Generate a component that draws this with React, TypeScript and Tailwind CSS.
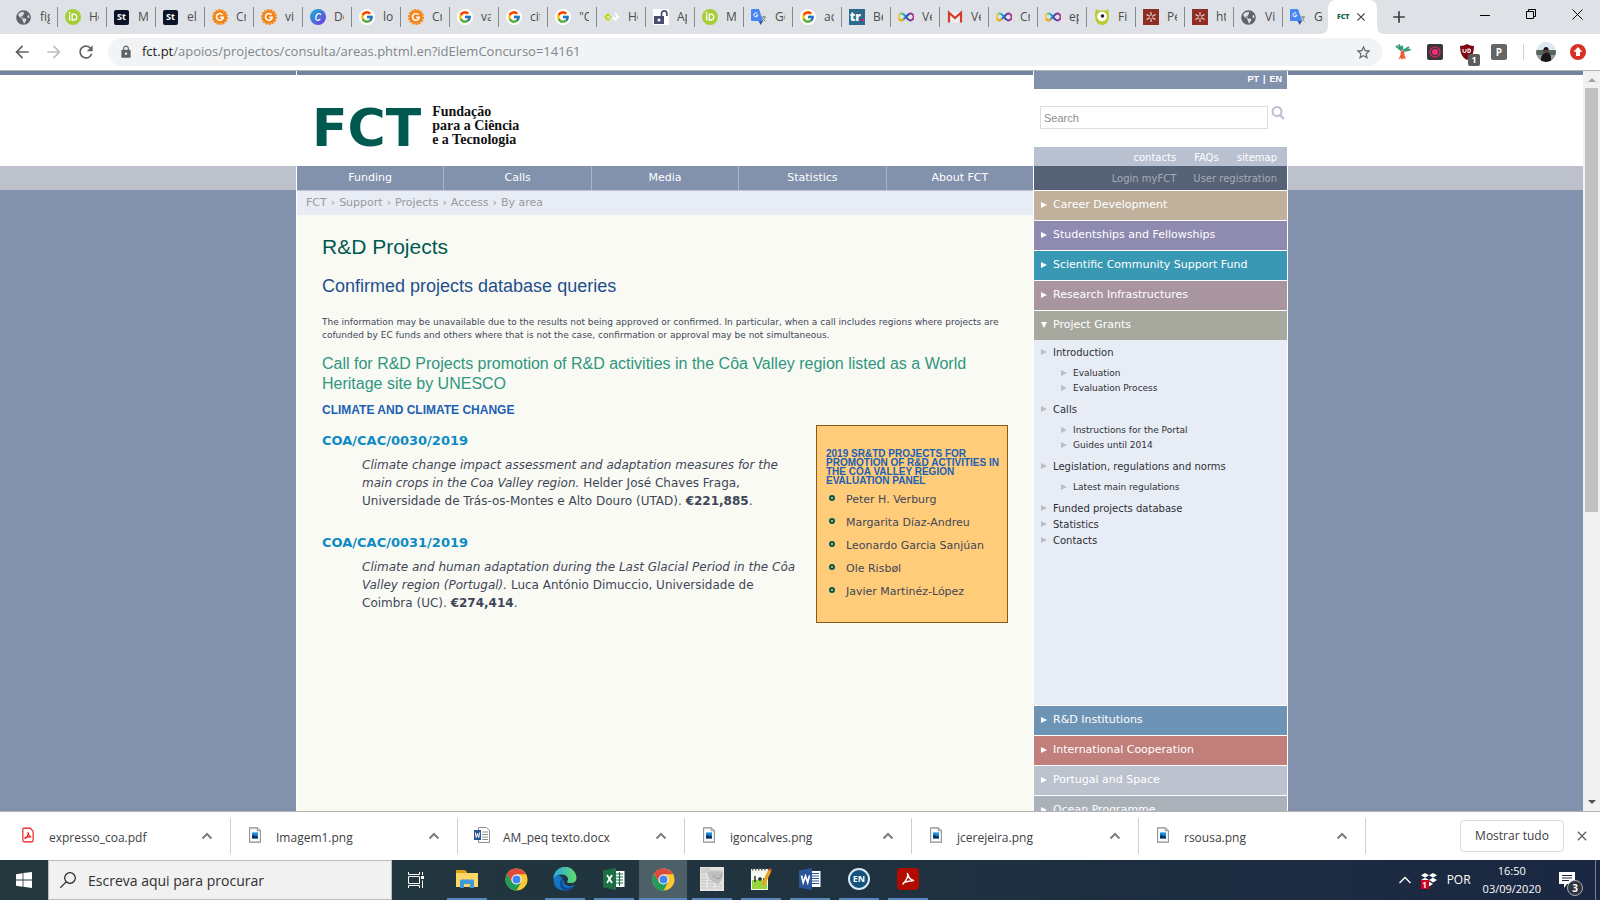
import type { ReactNode } from 'react';
import { FaGlobeAmericas } from 'react-icons/fa';
import { FcGoogle } from 'react-icons/fc';
import { MdArrowBack, MdArrowForward, MdRefresh, MdLock, MdStarBorder, MdClose, MdAdd } from 'react-icons/md';

const Globe = () => <FaGlobeAmericas className="size-[15px] text-[#5f6368]" />;

const Orcid = () => (
  <svg viewBox="0 0 16 16" className="size-4">
    <circle cx="8" cy="8" r="8" fill="#a6ce39" />
    <path d="M4.6 5.6v6M7.2 5.2v5.8h1.6c4 0 4-5.8 0-5.8z" fill="none" stroke="#fff" strokeWidth="1.3" />
    <circle cx="4.6" cy="3.8" r=".9" fill="#fff" />
  </svg>
);

const Statista = () => (
  <span className="flex size-[15px] items-center justify-center rounded-[2px] bg-[#0b1426] text-[9px] font-bold text-white">St</span>
);

const OrangeG = () => (
  <svg viewBox="0 0 16 16" className="size-4">
    <circle cx="8" cy="8" r="6.8" fill="#f68212" />
    <circle cx="8" cy="8" r="7.2" fill="none" stroke="#f68212" strokeWidth="1.6" strokeDasharray="2 1.2" />
    <path d="M10.6 5.8A3.4 3.4 0 1 0 11.3 8.4H8.2" fill="none" stroke="#fff" strokeWidth="1.6" />
  </svg>
);

const Canva = () => (
  <svg viewBox="0 0 16 16" className="size-4">
    <defs>
      <linearGradient id="canva" x1="0" y1="0" x2="1" y2="1">
        <stop offset="0" stopColor="#12b6cf" />
        <stop offset="1" stopColor="#7a30e6" />
      </linearGradient>
    </defs>
    <circle cx="8" cy="8" r="8" fill="url(#canva)" />
    <path d="M10.6 6c.2-2.6-4.6-1.800-4.800 2.600C5.700 12.200 9 12 10.300 9.900" fill="none" stroke="#fff" strokeWidth="1.2" />
  </svg>
);

const Google = () => (
  <span className="flex size-4 items-center justify-center rounded-full bg-white">
    <FcGoogle className="size-[14px]" />
  </span>
);

const Diamonds = () => (
  <svg viewBox="0 0 16 16" className="size-4">
    <path d="M4 5 1.300 8 4 11M4 5l1.500 1.500M4 11l1.500-1.500" fill="none" stroke="#c8d400" strokeWidth="1.800" />
    <path d="M12 5.500 14 8l-2.500 2.500L9 8" fill="none" stroke="#fff" strokeWidth="2" />
    <path d="M6.500 6.800 7.800 8 6.500 9.200 5.300 8z" fill="#c8d400" />
    <path d="m11.500 3 1.200 1.200-1.200 1.200-1.200-1.200z" fill="#fff" />
  </svg>
);

const OpenLock = () => (
  <svg viewBox="0 0 16 16" className="size-4">
    <path fill="#fff" d="M0 0h16v16H0z" />
    <path fill="#4a4e6e" d="M1 7h10v8H1z" />
    <path d="M8.500 7V4.500a2.700 2.700 0 0 1 5.400 0V7" fill="none" stroke="#4a4e6e" strokeWidth="1.700" />
    <circle cx="6" cy="11" r="1.500" fill="#fff" />
  </svg>
);

const Translate = () => (
  <svg viewBox="0 0 16 16" className="size-4">
    <path fill="#dfe0e2" d="M6 4h9q1 0 1 1v10q0 1-1 1H9z" />
    <path fill="#4687f4" d="M1 0h7l4 12H1q-1 0-1-1V1q0-1 1-1z" />
    <path fill="#3155b5" d="m7.500 12 2.200 4 2.300-4z" />
    <path d="M6.300 4.300a2 2 0 1 0 .6 1.900H4.900" fill="none" stroke="#fff" strokeWidth="1" />
    <path d="M10.500 8h4.500M12.700 7v1M14 8q-.5 2.500-3 4M11.500 9.500l3 3" fill="none" stroke="#6d7a86" strokeWidth=".9" />
  </svg>
);

const Tr = () => (
  <span className="flex size-4 items-center justify-center bg-[#2c6a8c] text-[12px] font-extrabold text-white">
    tr<span className="text-[#e6127d]">.</span>
  </span>
);

const Infinity8 = () => (
  <svg viewBox="0 0 16 16" className="size-4">
    <defs>
      <linearGradient id="loop">
        <stop offset="0" stopColor="#f2dc12" />
        <stop offset=".35" stopColor="#12a6df" />
        <stop offset=".6" stopColor="#3b3fa0" />
        <stop offset="1" stopColor="#c2308c" />
      </linearGradient>
    </defs>
    <path d="M8 8C6 5.300 4.800 4.600 3.700 4.600a3.200 3.200 0 0 0 0 6.800C5.500 11.400 10 4.600 12.300 4.600a3.200 3.200 0 0 1 0 6.800C11 11.400 10 10.700 8 8z" fill="none" stroke="url(#loop)" strokeWidth="2" />
    <path d="M1 9.500q2 3.500 5 .8" fill="none" stroke="#f7a81b" strokeWidth="1.900" />
  </svg>
);

const Gmail = () => (
  <svg viewBox="0 0 16 16" className="size-4">
    <path fill="#efefef" d="M1 3h14v10.500H1z" />
    <path d="M2 13.500V3.700L8 9l6-5.300v9.800" fill="none" stroke="#d5392c" strokeWidth="2.200" />
  </svg>
);

const Owl = () => (
  <svg viewBox="0 0 16 16" className="size-4">
    <path d="M2 0q1 1.500 3 1.500h6Q13 1.500 14 0q1.500 4 .9 8.500Q14 16 8 16T1.100 8.500Q.5 4 2 0z" fill="#bccb35" />
    <circle cx="8" cy="7.500" r="4.800" fill="#fff" />
    <circle cx="8.500" cy="7" r="1.800" fill="#222" />
  </svg>
);

const Star6 = () => (
  <svg viewBox="0 0 16 16" className="size-4">
    <path fill="#8e2e24" d="M0 0h16v16H0z" />
    <path d="M8 3v10M3.500 5.500l9 5M12.500 5.500l-9 5" stroke="#f3dcd6" strokeWidth="1.100" />
    <circle cx="8" cy="8" r="1.500" fill="#8e2e24" />
  </svg>
);

const tabs: { icon: () => ReactNode; text: string }[] = [
  { icon: Globe, text: 'fig' },
  { icon: Orcid, text: 'Ho' },
  { icon: Statista, text: 'M' },
  { icon: Statista, text: 'el' },
  { icon: OrangeG, text: 'Cr' },
  { icon: OrangeG, text: 'vi' },
  { icon: Canva, text: 'Do' },
  { icon: Google, text: 'lo' },
  { icon: OrangeG, text: 'Cr' },
  { icon: Google, text: 'va' },
  { icon: Google, text: 'cit' },
  { icon: Google, text: '"C' },
  { icon: Diamonds, text: 'Ho' },
  { icon: OpenLock, text: 'Ap' },
  { icon: Orcid, text: 'M' },
  { icon: Translate, text: 'Go' },
  { icon: Google, text: 'ac' },
  { icon: Tr, text: 'Be' },
  { icon: Infinity8, text: 'Ve' },
  { icon: Gmail, text: 'Ve' },
  { icon: Infinity8, text: 'Cr' },
  { icon: Infinity8, text: 'ep' },
  { icon: Owl, text: 'Fi' },
  { icon: Star6, text: 'Pe' },
  { icon: Star6, text: 'ht' },
  { icon: Globe, text: 'Vi' },
  { icon: Translate, text: 'G' },
];

function TabStrip() {
  return (
    <div className="flex h-[34px] shrink-0 bg-[#dee1e6]">
      <div className="flex pl-[9px]">
        {tabs.map(({ icon: Icon, text }, i) => (
          <button key={i} type="button" className="flex w-[49px] items-center text-[12px] text-[#4a4d51]">
            <span className="flex w-[31px] shrink-0 items-center pl-[7px]">
              <Icon />
            </span>
            <span className="w-[10px] overflow-hidden text-left whitespace-nowrap">{text}</span>
            <span className={i === tabs.length - 1 ? 'hidden' : 'ml-auto h-5 w-px bg-[#85888c]'} />
          </button>
        ))}
      </div>
      <div className="relative -ml-1 flex w-[49px] items-center rounded-t-lg bg-white pl-[9px]">
        <svg viewBox="0 0 8 8" className="absolute bottom-0 -left-2 size-2"><path fill="#fff" d="M0 8q8 0 8-8v8z" /></svg>
        <svg viewBox="0 0 8 8" className="absolute -right-2 bottom-0 size-2"><path fill="#fff" d="M8 8Q0 8 0 0v8z" /></svg>
        <span className="text-[7px] font-extrabold text-[#0f5c50]">FCT</span>
        <button type="button" aria-label="Close tab" className="ml-auto pr-[9px] text-[#3c4043]"><MdClose className="size-[14px]" /></button>
      </div>
      <button type="button" aria-label="New tab" className="ml-3 text-[#3c4043]"><MdAdd className="size-5" /></button>
      <div className="ml-auto flex items-start gap-[30px] pt-[6px] pr-[15px]">
        <svg viewBox="0 0 16 16" className="size-4"><path d="M3 9.500h10" stroke="#000" /></svg>
        <svg viewBox="0 0 16 16" className="size-4"><path d="M3.500 5.500h7v7h-7zM5.500 5.500v-2h7v7h-2" fill="none" stroke="#000" /></svg>
        <svg viewBox="0 0 16 16" className="size-4"><path d="m3.500 3.500 10 10m0-10-10 10" stroke="#000" /></svg>
      </div>
    </div>
  );
}

function Toolbar() {
  return (
    <div className="flex h-9 shrink-0 items-center bg-white pl-3">
      <button type="button" aria-label="Back" className="text-[#5f6368]"><MdArrowBack className="size-5" /></button>
      <button type="button" aria-label="Forward" className="ml-3 text-[#bdbfc2]"><MdArrowForward className="size-5" /></button>
      <button type="button" aria-label="Reload" className="ml-3 text-[#5f6368]"><MdRefresh className="size-5" /></button>
      <div className="ml-3 flex h-7 flex-1 items-center rounded-full bg-[#f1f3f4] pr-[10px] pl-[11px]">
        <MdLock className="size-[14px] text-[#5f6368]" />
        <p className="ml-[9px] flex-1 text-[13px] text-[#80868b]"><span className="text-[#202124]">fct.pt</span>/apoios/projectos/consulta/areas.phtml.en?idElemConcurso=14161</p>
        <button type="button" aria-label="Bookmark" className="text-[#5f6368]"><MdStarBorder className="size-[17px]" /></button>
      </div>
      <div className="flex items-center gap-4 pr-[14px] pl-[13px]">
        <svg viewBox="0 0 16 16" className="size-4">
          <path d="M1 2 6.500 6.500M3.500.5 7 6M7 1.500 7.500 6M15.500 5.500 8.500 7M14 3 8.500 6.500" fill="none" stroke="#2ea075" strokeWidth="1.900" />
          <path d="M6 6.500h3l.5 4.500 1.500 4.500-2.500-1.500-1.500 2-1-2-2.500 1.500L5.500 11z" fill="#ee5d3b" />
        </svg>
        <svg viewBox="0 0 16 16" className="size-4">
          <rect width="16" height="16" rx="2" fill="#38383a" />
          <circle cx="8" cy="8" r="5" fill="none" stroke="#e5266b" strokeWidth="1.200" />
          <circle cx="8" cy="8" r="3" fill="#f22f78" />
        </svg>
        <span className="relative">
          <svg viewBox="0 0 16 16" className="size-4">
            <path d="M8 0q3 2 7 2 0 11-7 14Q1 13 1 2q4 0 7-2z" fill="#800610" />
            <path d="M4 5v2.500q1.500 2 3 0V5M9 5v3.500h1.500q2-1.700 0-3.500z" fill="none" stroke="#fff" strokeWidth="1.100" />
          </svg>
          <span className="absolute top-[10px] left-[9px] flex h-3 w-3 items-center justify-center rounded-[2px] bg-[#5c5c5c] text-[9px] font-bold text-white">1</span>
        </span>
        <span className="flex size-4 items-center justify-center rounded-[2px] bg-[#656565] text-[10px] font-bold text-white">P</span>
        <span className="-mr-1 h-4 w-px bg-[#cfd1d4]" />
        <svg viewBox="0 0 20 20" className="size-5">
          <defs><clipPath id="face"><circle cx="10" cy="10" r="10" /></clipPath></defs>
          <g clipPath="url(#face)">
            <path fill="#dbe8f4" d="M0 0h20v20H0z" />
            <path fill="#586459" d="M0 8h20v5H0z" />
            <path fill="#9b9c98" d="M0 13h20v7H0z" />
            <path fill="#16181c" d="M5 20q-1-7 4-9l3-1q4 3 3 10z" />
            <circle cx="10" cy="8.500" r="2.600" fill="#5d4237" />
            <path fill="#17120f" d="M7.400 8.500q0-3.500 2.600-3.500t2.600 3l-2.600-.6z" />
          </g>
        </svg>
        <svg viewBox="0 0 16 16" className="-ml-[2px] size-4">
          <circle cx="8" cy="8" r="8" fill="#d93025" />
          <path d="m8 3 4.500 4.800H10V12H6V7.800H3.500z" fill="#fff" />
        </svg>
      </div>
    </div>
  );
}

function Gutter({ side }: { side: 'left' | 'right' }) {
  return (
    <div className={side === 'left' ? 'flex grow basis-px flex-col' : 'flex grow basis-0 flex-col'}>
      <div className="h-1 bg-[#7382a0]" />
      <div className="h-[91px] bg-white" />
      <div className="h-6 bg-[#bcc1cb]" />
      <div className="flex-1 bg-[#8291ac]" />
    </div>
  );
}

const projects = [
  {
    id: 'COA/CAC/0030/2019',
    title: 'Climate change impact assessment and adaptation measures for the main crops in the Coa Valley region.',
    who: 'Helder José Chaves Fraga, Universidade de Trás-os-Montes e Alto Douro (UTAD).',
    sum: '€221,885',
  },
  {
    id: 'COA/CAC/0031/2019',
    title: 'Climate and human adaptation during the Last Glacial Period in the Côa Valley region (Portugal).',
    who: 'Luca António Dimuccio, Universidade de Coimbra (UC).',
    sum: '€274,414',
  },
];

const panel = ['Peter H. Verburg', 'Margarita Díaz-Andreu', 'Leonardo Garcia Sanjúan', 'Ole Risbøl', 'Javier Martinéz-López'];

function MainColumn() {
  return (
    <div className="flex min-w-0 flex-1 flex-col bg-[#f9faf4]">
      <div className="h-1 bg-[#7382a0]" />
      <header className="flex h-[91px] bg-white pt-[28px] pl-[15px]">
        <a href="#home" className="flex">
          <span className="text-[52px] leading-[50px] font-bold text-[#00594f]">FCT</span>
          <span className="mt-[2px] ml-[11px] font-['Liberation_Serif',serif] text-[14px] leading-[14px] font-bold text-[#111]">
            Fundação<br />para a Ciência<br />e a Tecnologia
          </span>
        </a>
      </header>
      <nav className="flex h-[25px] border-b border-[#bcc4d2] bg-[#8291ac] text-[11px] text-white">
        {['Funding', 'Calls', 'Media', 'Statistics', 'About FCT'].map((t) => (
          <a key={t} href="#nav" className="flex flex-1 items-center justify-center border-r border-[#a9b4c7] pt-px last:border-r-0">{t}</a>
        ))}
      </nav>
      <div className="flex h-6 items-center gap-1 bg-[#e8edf5] pl-[9px] text-[11px] text-[#999]">
        <a href="#fct">FCT</a>›<a href="#support">Support</a>›<a href="#projects">Projects</a>›<a href="#access">Access</a>›<span>By area</span>
      </div>
      <main className="px-[25px] text-[#3f4757]">
        <h1 className="mt-5 font-['Liberation_Sans',Arial,sans-serif] text-[21px] leading-6 text-[#00594f]">R&amp;D Projects</h1>
        <h2 className="mt-[15px] font-['Liberation_Sans',Arial,sans-serif] text-[18px] leading-6 text-[#1f4f8c]">Confirmed projects database queries</h2>
        <p className="mt-[18px] text-[9px] leading-[13px]">
          The information may be unavailable due to the results not being approved or confirmed. In particular, when a call includes regions where projects are cofunded by EC funds and others where that is not the case, confirmation or approval may be not simultaneous.
        </p>
        <h3 className="mt-3 font-['Liberation_Sans',Arial,sans-serif] text-[16px] leading-5 text-[#2f9680]">
          Call for R&amp;D Projects promotion of R&amp;D activities in the Côa Valley region listed as a World Heritage site by UNESCO
        </h3>
        <h4 className="mt-2 font-['Liberation_Sans',Arial,sans-serif] text-[12px] leading-4 font-bold text-[#1d5fb4]">CLIMATE AND CLIMATE CHANGE</h4>
        <div className="mt-[7px] flex">
          <div className="flex-1 pt-2">
            {projects.map((p) => (
              <article key={p.id} className="mb-[25px]">
                <h5 className="text-[13px] leading-4 font-bold text-[#0d8bc4]">{p.id}</h5>
                <p className="mt-[7px] pr-3 pl-10 text-[12px] leading-[18px]">
                  <i>{p.title}</i> {p.who} <b>{p.sum}</b>.
                </p>
              </article>
            ))}
          </div>
          <aside className="w-[192px] self-start border border-[#8b5a14] bg-[#ffcc7a] px-[9px] pt-[23px] pb-[18px]">
            <h5 className="font-['Liberation_Sans',Arial,sans-serif] text-[10px] leading-[9px] font-bold whitespace-nowrap text-[#1d5fb4]">
              2019 SR&amp;TD PROJECTS FOR<br />PROMOTION OF R&amp;D ACTIVITIES IN<br />THE CÔA VALLEY REGION<br />EVALUATION PANEL
            </h5>
            <ul className="mt-1">
              {panel.map((n) => (
                <li key={n} className="flex h-[23px] items-center text-[11px]">
                  <svg viewBox="0 0 6 6" className="mr-[11px] mb-[5px] ml-[3px] size-[6px]"><circle cx="3" cy="3" r="2" fill="none" stroke="#00594f" strokeWidth="2" /></svg>
                  {n}
                </li>
              ))}
            </ul>
          </aside>
        </div>
      </main>
    </div>
  );
}

const Arrow = ({ down = false }: { down?: boolean }) => (
  <svg viewBox="0 0 6 8" className="h-2 w-[6px] shrink-0 fill-current"><path d={down ? 'M0 0h6L3 6z' : 'M0 0v6l6-3z'} /></svg>
);

const MenuLink = ({ tone, down, children }: { tone: string; down?: boolean; children: string }) => (
  <a href="#menu" className={`mt-px flex h-[29px] shrink-0 items-center gap-[6px] pl-[7px] text-[11px] text-white ${tone}`}>
    <Arrow down={down} />
    {children}
  </a>
);

const grants: { text: string; sub?: string[] }[] = [
  { text: 'Introduction', sub: ['Evaluation', 'Evaluation Process'] },
  { text: 'Calls', sub: ['Instructions for the Portal', 'Guides until 2014'] },
  { text: 'Legislation, regulations and norms', sub: ['Latest main regulations'] },
  { text: 'Funded projects database' },
  { text: 'Statistics' },
  { text: 'Contacts' },
];

function SideColumn() {
  return (
    <div className="flex w-[253px] flex-col bg-white">
      <div className="flex h-[18px] shrink-0 items-center justify-end gap-1 bg-[#8291ac] pr-[5px] font-['Liberation_Sans',Arial,sans-serif] text-[9px] font-bold text-white">
        <a href="#pt">PT</a>|<a href="#en">EN</a>
      </div>
      <form className="flex h-[58px] shrink-0 pt-[17px] pl-[6px]">
        <input aria-label="Search" placeholder="Search" className="h-[23px] w-[228px] border border-[#ddd] px-[3px] font-['Liberation_Sans',Arial,sans-serif] text-[11px] placeholder:text-[#8c8c8c]" />
        <button type="button" aria-label="Go" className="ml-[3px] self-start">
          <svg viewBox="0 0 14 14" className="size-[14px]"><circle cx="6" cy="5.500" r="4.500" fill="none" stroke="#b9c0d0" strokeWidth="2" /><path d="m9 9 4 4" stroke="#b9c0d0" strokeWidth="2.400" /></svg>
        </button>
      </form>
      <div className="flex h-[19px] shrink-0 items-center justify-end gap-[18px] bg-[#b9c0d0] pt-[2px] pr-[10px] text-[10px] text-white">
        <a href="#contacts">contacts</a><a href="#faqs">FAQs</a><a href="#sitemap">sitemap</a>
      </div>
      <div className="flex h-6 shrink-0 items-center justify-end gap-[17px] bg-[#566275] pt-px pr-[10px] text-[10px] text-[#a6abb5]">
        <a href="#login">Login myFCT</a><a href="#register">User registration</a>
      </div>
      <MenuLink tone="bg-[#c0b09c]">Career Development</MenuLink>
      <MenuLink tone="bg-[#8e8ab0]">Studentships and Fellowships</MenuLink>
      <MenuLink tone="bg-[#3998b3]">Scientific Community Support Fund</MenuLink>
      <MenuLink tone="bg-[#a995a0]">Research Infrastructures</MenuLink>
      <MenuLink tone="bg-[#a7a99f]" down>Project Grants</MenuLink>
      <ul className="min-h-[365px] shrink-0 bg-[#e8edf5] pt-[5px] pl-[7px] text-[10px] leading-4 text-[#2c2f36]">
        {grants.map((g) => (
          <li key={g.text}>
            <a href="#grants" className="flex items-center gap-[6px]"><span className="text-[#b9becb]"><Arrow /></span>{g.text}</a>
            {g.sub && (
              <ul className="mt-[5px] mb-[6px] pl-5 text-[9px] leading-[15px]">
                {g.sub.map((s) => (
                  <li key={s}><a href="#grants" className="flex items-center gap-[6px]"><span className="text-[#b9becb]"><Arrow /></span>{s}</a></li>
                ))}
              </ul>
            )}
          </li>
        ))}
      </ul>
      <MenuLink tone="bg-[#6e94b5]">R&amp;D Institutions</MenuLink>
      <MenuLink tone="bg-[#c07f7b]">International Cooperation</MenuLink>
      <MenuLink tone="bg-[#bcc3cf]">Portugal and Space</MenuLink>
      <MenuLink tone="bg-[#aab1b9]">Ocean Programme</MenuLink>
    </div>
  );
}

const ImageFile = () => (
  <svg viewBox="0 0 14 18" className="h-4 w-3">
    <path d="M.7.700h9L13.300 4v13.300H.7z" fill="#fbfbfb" stroke="#8d8d8d" strokeWidth="1.200" />
    <path d="M9.500.700V4h3.800" fill="#ddd" stroke="#8d8d8d" />
    <path fill="#1b8be0" d="M3.500 6h7v7h-7z" /><path fill="#0b2f60" d="m3.500 13v-3l2-1.500 2 2 1-1 2 1.500v2z" />
  </svg>
);
const PdfFile = () => (
  <svg viewBox="0 0 14 18" className="h-4 w-3">
    <path d="M2 1h7.500L13 4.500V15q0 2-2 2H3q-2 0-2-2V3q0-2 1-2z" fill="#fff" stroke="#ef1010" strokeWidth="1.300" />
    <path d="M7 5.500q1 5-3.500 7.500-1-2 7-1.800Q7.500 10 7 5.500z" fill="none" stroke="#ef1010" strokeWidth="1.200" />
  </svg>
);
const WordFile = () => (
  <svg viewBox="0 0 16 16" className="size-4">
    <path d="M4.500.500h8l3 3v12h-11z" fill="#fff" stroke="#8d8d8d" />
    <path d="M8 5h6M8 7.500h6M8 10h6M8 12.500h6" stroke="#8f8f8f" />
    <path fill="#2a5699" d="M0 3h7v10H0z" /><path d="m1.300 5.500 1 5 1.200-4 1.200 4 1-5" fill="none" stroke="#fff" />
  </svg>
);

const downloads: { name: string; icon: () => ReactNode }[] = [
  { name: 'expresso_coa.pdf', icon: PdfFile },
  { name: 'Imagem1.png', icon: ImageFile },
  { name: 'AM_peq texto.docx', icon: WordFile },
  { name: 'igoncalves.png', icon: ImageFile },
  { name: 'jcerejeira.png', icon: ImageFile },
  { name: 'rsousa.png', icon: ImageFile },
];

function Downloads() {
  return (
    <div className="flex h-[49px] shrink-0 items-center border-t border-[#b3b3b3] bg-white pl-1">
      {downloads.map(({ name, icon: Icon }) => (
        <div key={name} className="flex h-9 w-[227px] items-center border-r border-[#cfcfcf] text-[12px] text-[#3c4043]">
          <span className="flex w-[45px] items-center justify-center pl-[3px] pb-[2px]"><Icon /></span>
          <span className="flex-1 pt-[4px]">{name}</span>
          <button type="button" aria-label="Options" className="mr-[17px]">
            <svg viewBox="0 0 12 8" className="h-2 w-3"><path d="m1.500 6.500 4.500-4.500 4.500 4.500" fill="none" stroke="#7d7d7d" strokeWidth="2" /></svg>
          </button>
        </div>
      ))}
      <button type="button" className="ml-auto h-8 w-[104px] rounded-[4px] border border-[#dadce0] text-[12px] text-[#3c4043]">Mostrar tudo</button>
      <button type="button" aria-label="Close" className="mr-[10px] ml-[10px] text-[#5f6368]"><MdClose className="size-4" /></button>
    </div>
  );
}

const Chrome = () => (
  <svg viewBox="0 0 24 24" className="size-[23px]">
    <circle cx="12" cy="12" r="11.500" fill="#fcc934" />
    <path d="M2.040 6.250 7.200 15 12 12V6.500h9.960A11.500 11.500 0 0 0 2.040 6.250z" fill="#dd4b3e" />
    <path d="M2.040 6.250 7.300 15 12 17l4.700-2L12 23.500A11.500 11.500 0 0 1 2.040 6.250z" fill="#1e9e58" />
    <circle cx="12" cy="12" r="5.300" fill="#fff" />
    <circle cx="12" cy="12" r="4.200" fill="#4285f4" />
  </svg>
);
const Explorer = () => (
  <svg viewBox="0 0 22 20" className="h-5 w-[22px]">
    <path fill="#e0a015" d="M0 1h9l2 2v3H0z" /><path fill="#ffd769" d="M0 4h22v14H0z" />
    <path fill="#3f97dc" d="M4 12q0-1.500 1.500-1.500h11q1.500 0 1.500 1.500v7h-4v-4H8v4H4z" />
  </svg>
);
const Edge = () => (
  <svg viewBox="0 0 24 24" className="size-6">
    <defs>
      <linearGradient id="edgeTop"><stop offset="0" stopColor="#2aa7e0" /><stop offset="1" stopColor="#5fdc6a" /></linearGradient>
    </defs>
    <path d="M.7 10Q-.5 23 12 23.500q6 0 9.500-5.500-3 1.500-6 1-5-1-5-5.500Q9 9 5 8.500 2 8.500.7 10z" fill="#1376c9" />
    <path d="M.5 11.500A11.500 11.500 0 0 1 23.500 11q0 5-6 5-3.500 0-3.500-1.500 1.500-1 .8-3.500Q13 7 8 7.500 3 8 .5 11.500z" fill="url(#edgeTop)" />
    <path d="M10.500 11q-3.500 6 2 9.500 4 1.500 9-2-3.500 5-9 5Q6 22 7 15q.5-3 3.500-4z" fill="#0e4c98" />
  </svg>
);
const Office = ({ color, kind }: { color: string; kind: 'x' | 'w' }) => (
  <svg viewBox="0 0 22 22" className="size-[22px]">
    <path d="M11 3h10.500v16H11z" fill="#fff" />
    <path d={kind === 'x' ? 'M13 6h7M13 9h7M13 12h7M13 15h7M16.500 4v14' : 'M13 5.500h7M13 8h7M13 10.500h7M13 13h7M13 15.500h7'} stroke={color} strokeWidth="1.200" />
    <path d="M0 2.500 13 0v22L0 19.500z" fill={color} />
    <path d={kind === 'x' ? 'm4 7 5 8M9 7l-5 8' : 'm2.500 7.500 1.700 7 2.300-6.500 2.200 6.500 1.800-7'} fill="none" stroke="#fff" strokeWidth="1.700" />
  </svg>
);
const Paper = () => (
  <svg viewBox="0 0 24 24" className="size-6">
    <path fill="#e4e4e2" d="M0 0h24v24H0z" />
    <path d="M1 2h9M1 4h22M1 6h5M1 9h5M1 12h6M1 15h5M1 18h5M1 21h5M8 15h6M8 18h6M8 21h6M16 18h6M16 21h6M8 12h5" stroke="#b3b3b3" strokeWidth=".8" />
    <path fill="#bfbfbf" d="M7 5q8-2 16 0l-1 7q-2 5-5 5-5-2-8-6z" /><path d="M13 8q3 5 7 3l2-4" fill="none" stroke="#9a9a9a" />
  </svg>
);
const Notepad = () => (
  <svg viewBox="0 0 24 24" className="size-6">
    <path fill="#f5f8ef" d="M2 2h17v21H2z" /><path fill="#8ed22c" d="M3 13h15v9H3z" opacity=".9" />
    <path d="M3 2.500h15" stroke="#666" strokeDasharray="1.500 1.500" strokeWidth="2" />
    <path d="M6 9v6M9 12h4M11 10v4M14 12h3" stroke="#222" strokeWidth="1.400" />
    <path d="m21 3-7 15" stroke="#e9a51f" strokeWidth="3.400" /><path d="m20 2 2.500 1.500" stroke="#c04a3a" strokeWidth="2.500" />
  </svg>
);
const EndNote = () => (
  <span className="flex size-[22px] items-center justify-center rounded-full border-2 border-[#dbe9f0] bg-[#12527d] text-[9px] font-bold text-white">EN</span>
);
const Acrobat = () => (
  <svg viewBox="0 0 22 22" className="size-[22px]">
    <rect width="22" height="22" rx="4" fill="#b30b00" />
    <path d="M10.500 5.500q1.500 4-4.500 10.500-.5-2 10.500-3.500Q12 11.500 10.500 5.500z" fill="none" stroke="#fff" strokeWidth="1.500" strokeLinejoin="round" />
  </svg>
);

const apps: { label: string; icon: ReactNode; idle?: boolean; active?: boolean }[] = [
  { label: 'Explorer', icon: <Explorer /> },
  { label: 'Chrome', icon: <Chrome />, idle: true },
  { label: 'Edge', icon: <Edge /> },
  { label: 'Excel', icon: <Office color="#1d7044" kind="x" /> },
  { label: 'Chrome window', icon: <Chrome />, active: true },
  { label: 'Paper', icon: <Paper /> },
  { label: 'Notepad', icon: <Notepad /> },
  { label: 'Word', icon: <Office color="#2a5699" kind="w" /> },
  { label: 'EndNote', icon: <EndNote /> },
  { label: 'Acrobat', icon: <Acrobat /> },
];

function Taskbar() {
  return (
    <div className="flex h-10 shrink-0 bg-linear-to-r from-[#24393e] via-[#20333f] to-[#1a2742] text-white">
      <button type="button" aria-label="Start" className="flex w-12 items-center justify-center">
        <svg viewBox="0 0 16 16" className="size-4"><path fill="#fff" d="M0 2.200 6.600 1.200v6.400H0zM7.400 1.100 16 0v7.600H7.400zM0 8.400h6.600v6.400L0 13.800zM7.400 8.400H16V16l-8.600-1.200z" /></svg>
      </button>
      <label className="flex w-[344px] items-center border border-[#b9bcbd] bg-[#f1f1f1] pl-[11px]">
        <svg viewBox="0 0 16 16" className="size-4"><circle cx="10" cy="6" r="5.300" fill="none" stroke="#222" strokeWidth="1.200" /><path d="m6.200 9.800-6 6" stroke="#222" strokeWidth="1.200" /></svg>
        <input aria-label="Search Windows" placeholder="Escreva aqui para procurar" className="ml-3 flex-1 bg-transparent text-[14px] placeholder:text-[#2f2f2f]" />
      </label>
      <button type="button" aria-label="Task view" className="mr-[3px] flex w-12 items-center justify-center">
        <svg viewBox="0 0 16 16" className="size-4"><path d="M.5 0v2.500h11V0M.5 16v-2.500h11V16M.5 4.500h11v7H.5zM14.500 0v3M14.500 8.500V16" fill="none" stroke="#fff" /><path fill="#fff" d="M13 4h3v3h-3z" /></svg>
      </button>
      <div className="flex gap-px">
        {apps.map((a) => (
          <button key={a.label} type="button" aria-label={a.label} className={a.active ? 'flex w-12 flex-col items-center bg-[#4d5f67]' : 'flex w-12 flex-col items-center px-1'}>
            <span className="flex h-[38px] items-center">{a.icon}</span>
            <span className={a.idle ? 'h-[2px] w-full' : 'h-[2px] w-full bg-[#5688bf]'} />
          </button>
        ))}
      </div>
      <div className="ml-auto flex items-center text-[11px]">
        <svg viewBox="0 0 12 8" className="h-2 w-3"><path d="m.5 7 5.500-5.500L11.500 7" fill="none" stroke="#fff" strokeWidth="1.300" /></svg>
        <span className="relative ml-[10px]">
          <svg viewBox="0 0 16 14" className="h-[14px] w-4"><path fill="#fff" d="m4 0 4 2.300L4 4.700 0 2.300zM12 0l4 2.300-4 2.400-4-2.400zM4 4.700 8 7 4 9.500 0 7zM12 4.700 16 7l-4 2.500L8 7zM8 8.500l4 2.500-4 2.500L4 11z" /></svg>
          <span className="absolute top-[7px] left-0 flex h-[9px] w-2 items-center justify-center bg-[#d70022] text-[8px] font-bold">1</span>
        </span>
        <span className="ml-[10px] text-[12px]">POR</span>
        <span className="ml-[12px] text-center leading-[18px]">16:50<br />03/09/2020</span>
        <span className="relative ml-[18px]">
          <svg viewBox="0 0 16 16" className="size-4"><path fill="#fff" d="M0 0h16v12H8l-3 4v-4H0z" /><path d="M3 3.500h10M3 6h10M3 8.500h7" stroke="#1a2742" /></svg>
          <span className="absolute top-[8px] left-[8px] flex size-4 items-center justify-center rounded-full border border-[#a9adb5] bg-[#30343c] text-[10px] font-bold">3</span>
        </span>
        <span className="mr-1 ml-5 h-10 w-px bg-[#7a8494]" />
      </div>
    </div>
  );
}

export default function App() {
  return (
    <div className="flex h-screen flex-col overflow-hidden font-['Open_Sans',sans-serif]">
      <TabStrip />
      <Toolbar />
      <div className="flex min-h-0 flex-1 border-t border-[#b3b3b3] font-['DejaVu_Sans',Verdana,sans-serif]">
        <div className="flex min-h-0 min-w-0 flex-1 overflow-hidden">
          <Gutter side="left" />
          <div className="flex w-[992px] gap-px border-x border-white bg-white">
            <MainColumn />
            <SideColumn />
          </div>
          <Gutter side="right" />
        </div>
        <div className="flex w-[17px] flex-col items-center bg-[#f1f1f1]">
          <svg viewBox="0 0 8 5" className="mt-[6px] mb-[6px] h-[5px] w-2"><path d="m0 5 4-4 4 4z" fill="#a3a3a3" /></svg>
          <div className="h-[424px] w-[13px] bg-[#c1c1c1]" />
          <svg viewBox="0 0 8 5" className="mt-auto mb-[6px] h-[5px] w-2"><path d="m0 0 4 4 4-4z" fill="#505050" /></svg>
        </div>
      </div>
      <Downloads />
      <Taskbar />
    </div>
  );
}
